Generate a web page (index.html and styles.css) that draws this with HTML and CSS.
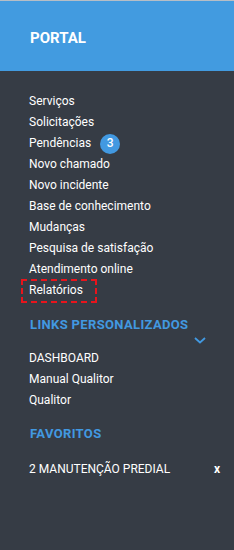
FILE: index.html
```html
<!DOCTYPE html>
<html lang="pt">
<head>
<meta charset="utf-8">
<link rel="stylesheet" href="styles.css">
</head>
<body>
<div class="sidebar">
  <div class="topline"></div>
  <div class="header"><span class="brand">PORTAL</span></div>
  <ul class="menu">
    <li>Serviços</li>
    <li>Solicitações</li>
    <li>Pendências <span class="badge">3</span></li>
    <li>Novo chamado</li>
    <li>Novo incidente</li>
    <li>Base de conhecimento</li>
    <li>Mudanças</li>
    <li>Pesquisa de satisfação</li>
    <li>Atendimento online</li>
    <li class="marked">Relatórios</li>
  </ul>
  <div class="section-title">LINKS PERSONALIZADOS</div>
  <div class="chev-row">
    <svg class="chev" width="12" height="7" viewBox="0 0 12 7"><path d="M1 1 L6 5.5 L11 1" fill="none" stroke="#4299e1" stroke-width="1.8"/></svg>
  </div>
  <ul class="menu links">
    <li>DASHBOARD</li>
    <li>Manual Qualitor</li>
    <li>Qualitor</li>
  </ul>
  <div class="section-title fav">FAVORITOS</div>
  <div class="fav-row">
    <span>2 MANUTENÇÃO PREDIAL</span>
    <span class="close">x</span>
  </div>
</div>
</body>
</html>
```
FILE: styles.css
```css
html, body {
  margin: 0;
  padding: 0;
}
body {
  background: #363c45;
  font-family: Roboto, "Noto Sans", sans-serif;
  color: #ffffff;
}
.sidebar {
  width: 234px;
  height: 550px;
  background: #363c45;
  display: flex;
  flex-direction: column;
}
.topline {
  height: 1px;
  background: #b7bec6;
}
.header {
  height: 70px;
  background: #429be0;
  box-sizing: border-box;
  padding: 28px 0 0 30px;
}
.brand {
  font-size: 15px;
  font-weight: 700;
  line-height: 18px;
  display: block;
  color: #ffffff;
}
.menu {
  list-style: none;
  margin: 20px 0 0 0;
  padding: 0 0 0 29px;
}
.menu li {
  font-size: 12px;
  line-height: 21px;
  height: 21px;
  display: flex;
  align-items: center;
}
.menu li.marked {
  position: relative;
  align-self: flex-start;
}
.menu li.marked::after {
  content: "";
  position: absolute;
  left: -8px;
  top: -1px;
  width: 72px;
  height: 20px;
  border: 2px dashed #e8141c;
}
.badge {
  display: inline-flex;
  align-items: center;
  justify-content: center;
  width: 20px;
  height: 20px;
  border-radius: 50%;
  background: #4299e1;
  font-size: 12px;
  font-weight: 500;
  margin-left: 9px;
}
.section-title {
  margin-top: 16px;
  padding-left: 30px;
  font-size: 13px;
  font-weight: 700;
  letter-spacing: 0.35px;
  line-height: 16px;
  color: #4299e1;
}
.chev-row {
  height: 15px;
  display: flex;
  justify-content: flex-end;
  align-items: center;
  padding-right: 28px;
}
.chev {
  display: block;
}
.menu.links {
  margin-top: 0;
}
.section-title.fav {
  margin-top: 15px;
}
.fav-row {
  margin-top: 17px;
  display: flex;
  justify-content: space-between;
  padding: 0 14px 0 29px;
  font-size: 12px;
  line-height: 21px;
}
.close {
  font-weight: 700;
}
```
